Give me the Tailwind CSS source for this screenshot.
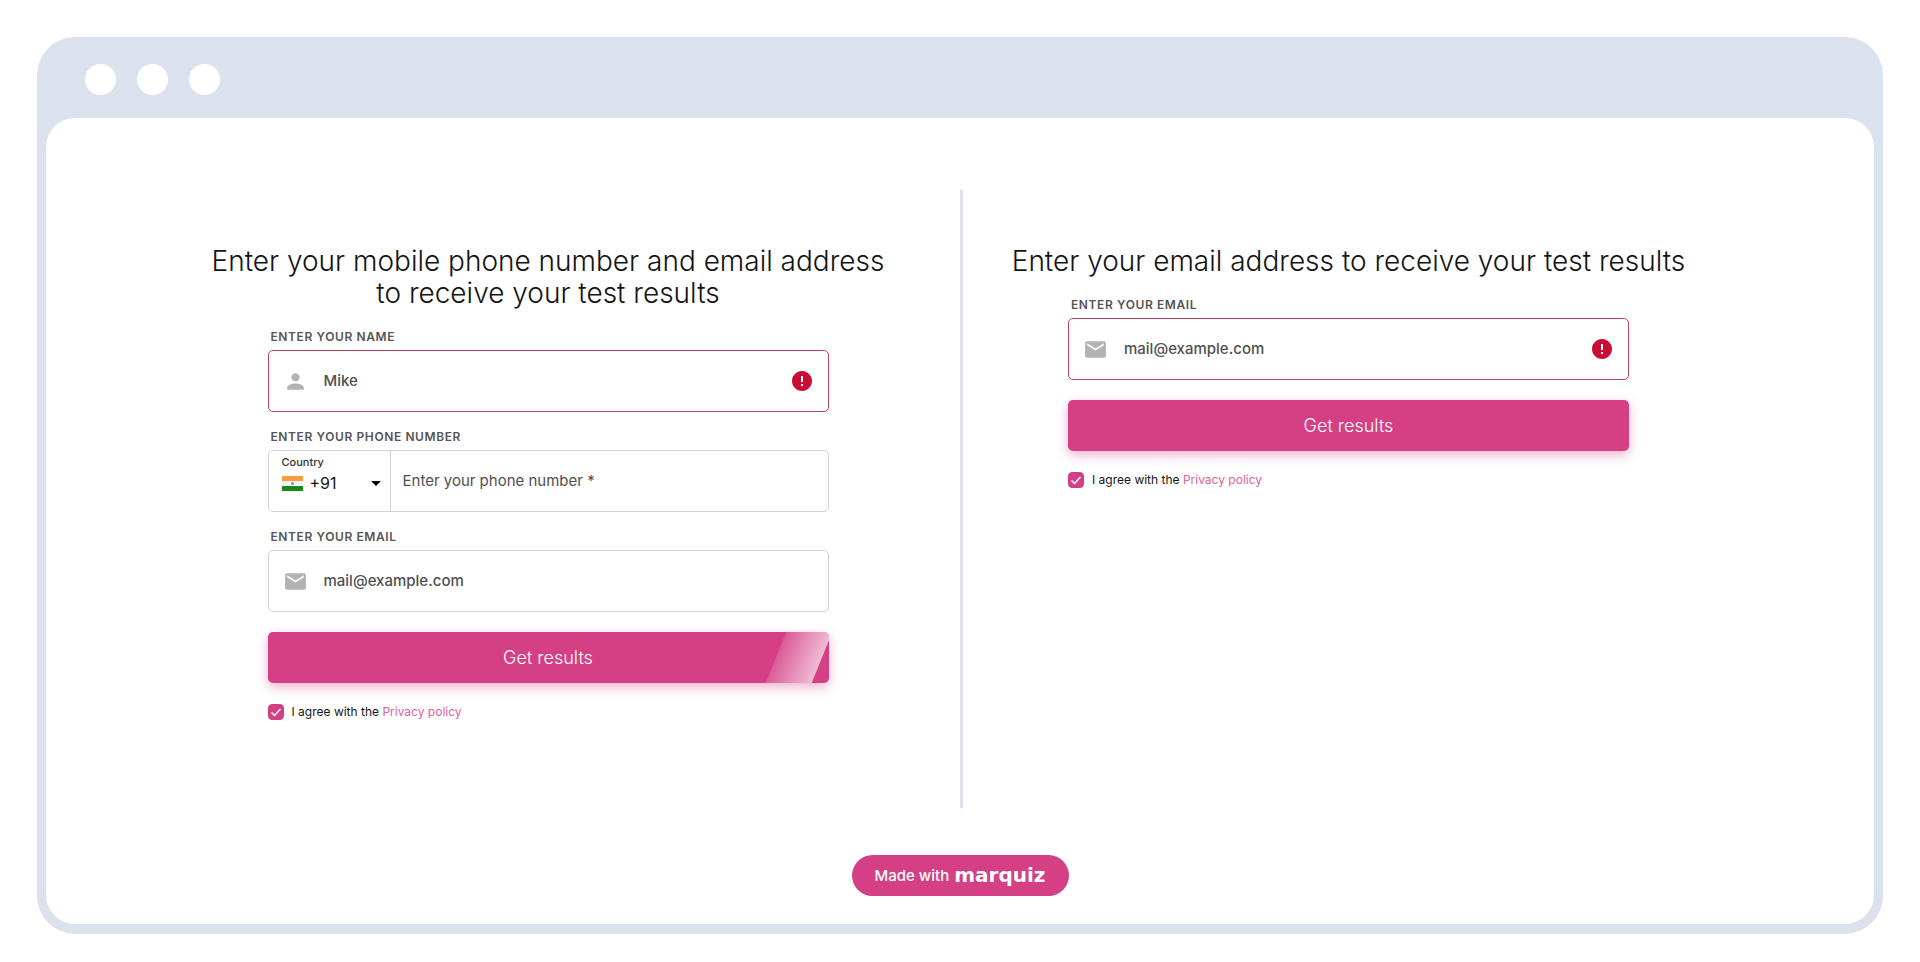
<!DOCTYPE html>
<html lang="en">
<head>
  <meta charset="UTF-8">
  <meta name="viewport" content="width=device-width, initial-scale=1.0">
  <title>Contact form</title>
  <script src="https://cdn.jsdelivr.net/npm/@tailwindcss/browser@4"></script>
</head>
<body class="bg-white px-[37px] pt-[37px] pb-7 font-['Inter',sans-serif] text-[#141414]">

  <!-- Browser frame -->
  <div class="rounded-[38px] bg-[#dbe1ed] px-[9px] pb-[10px]">
    <div class="flex h-[81px] items-center gap-[21px] px-[39px] pt-[3px]">
      <span class="size-[31px] rounded-full bg-white"></span>
      <span class="size-[31px] rounded-full bg-white"></span>
      <span class="size-[31px] rounded-full bg-white"></span>
    </div>

    <main class="flex flex-col items-center rounded-[29px] bg-white pt-[72px] pb-7">
      <div class="grid min-h-[618px] w-full grid-cols-[824fr_3px_771fr] pr-[140px] pl-[90px]">

        <!-- Name, phone and email -->
        <section class="flex flex-col items-center pt-[55px]">
          <h2 class="text-center text-[28px] leading-8 font-light">Enter your mobile phone number and email address<br>to receive your test results</h2>

          <form class="mt-[19px] w-full max-w-[561px]">
            <label for="name" class="ml-[3px] block text-xs leading-[18px] font-semibold tracking-wider text-[#555]">ENTER YOUR NAME</label>
            <div class="mt-1 flex h-[62px] items-center rounded-[5px] border border-[#b9405f] px-[14px]">
              <svg class="size-[25px] shrink-0 fill-[#b3b3b3]" viewBox="0 0 24 24"><path d="M12 12c2.21 0 4-1.79 4-4s-1.79-4-4-4-4 1.79-4 4 1.79 4 4 4zm0 2c-2.67 0-8 1.34-8 4v2h16v-2c0-2.66-5.33-4-8-4z"/></svg>
              <input id="name" type="text" placeholder="Mike" class="min-w-0 grow px-4 text-[15px] font-medium outline-none placeholder:text-[#505050]">
              <svg class="size-6 shrink-0 fill-[#cb0c33]" viewBox="0 0 24 24"><path d="M12 2C6.48 2 2 6.48 2 12s4.48 10 10 10 10-4.48 10-10S17.52 2 12 2zm1 15h-2v-2h2v2zm0-4h-2V7h2v6z"/></svg>
            </div>

            <label for="phone" class="mt-4 ml-[3px] block text-xs leading-[18px] font-semibold tracking-wider text-[#555]">ENTER YOUR PHONE NUMBER</label>
            <div class="mt-1 flex h-[62px] rounded-[5px] border border-[#d2d2d2]">
              <div class="w-[122px] shrink-0 border-r border-[#d2d2d2] pr-[9px] pl-[13px]">
                <label for="country" class="mt-1 block text-[11px] leading-[14px] font-medium text-[#333]">Country</label>
                <div class="mt-[2px] flex items-center">
                  <svg class="h-[15px] w-[21px] shrink-0" viewBox="0 0 21 15">
                    <rect width="21" height="5" fill="#f89c3c"/>
                    <rect y="5" width="21" height="5" fill="#f3f3f6"/>
                    <rect y="10" width="21" height="5" fill="#178a1b"/>
                    <circle cx="10.5" cy="7.5" r="1.5" fill="#8e8eaa"/>
                  </svg>
                  <select id="country" class="min-w-0 grow appearance-none pl-[7px] text-base outline-none">
                    <option>+91</option>
                    <option>+1</option>
                    <option>+44</option>
                  </select>
                  <svg class="h-[5px] w-[10px] shrink-0" viewBox="0 0 10 5"><path d="M0 0h10L5 5z"/></svg>
                </div>
              </div>
              <input id="phone" type="tel" placeholder="Enter your phone number *" class="min-w-0 grow px-3 text-[15px] outline-none placeholder:text-[#505050]">
            </div>

            <label for="email" class="mt-4 ml-[3px] block text-xs leading-[18px] font-semibold tracking-wider text-[#555]">ENTER YOUR EMAIL</label>
            <div class="mt-1 flex h-[62px] items-center rounded-[5px] border border-[#d2d2d2] px-[14px]">
              <svg class="size-[25px] shrink-0 fill-[#b3b3b3]" viewBox="0 0 24 24"><path d="M20 4H4c-1.1 0-1.99.9-1.99 2L2 18c0 1.1.9 2 2 2h16c1.1 0 2-.9 2-2V6c0-1.1-.9-2-2-2zm0 4l-8 5-8-5V6l8 5 8-5v2z"/></svg>
              <input id="email" type="email" placeholder="mail@example.com" class="min-w-0 grow px-4 text-[15px] font-medium outline-none placeholder:text-[#505050]">
            </div>

            <button type="button" class="relative mt-5 h-[51px] w-full overflow-hidden rounded-[5px] bg-[#d43f85] text-lg font-light text-white shadow-[0_4px_12px_rgba(212,63,133,0.4)]">
              Get results
              <span class="absolute inset-y-0 right-[7px] w-[46px] -skew-x-[22deg] bg-linear-to-r from-white/15 to-white/65"></span>
            </button>

            <div class="mt-[21px] flex items-center gap-2 text-xs leading-4">
              <span class="grid">
                <input id="agree-1" type="checkbox" checked class="peer col-start-1 row-start-1 size-4 appearance-none rounded-[4px] border border-[#d43f85] checked:bg-[#d43f85]">
                <svg class="pointer-events-none invisible col-start-1 row-start-1 size-4 fill-none stroke-white stroke-[1.5] peer-checked:visible" viewBox="0 0 16 16"><path d="M3.5 8.5l3 3 6-6.500"/></svg>
              </span>
              <label for="agree-1">I agree with the <a href="#" class="text-[#d9659c]">Privacy policy</a></label>
            </div>
          </form>
        </section>

        <div class="bg-[#dbe1ed]"></div>

        <!-- Email only -->
        <section class="flex flex-col items-center pt-[55px]">
          <h2 class="text-center text-[28px] leading-8 font-light">Enter your email address to receive your test results</h2>

          <form class="mt-[19px] w-full max-w-[561px]">
            <label for="email-only" class="ml-[3px] block text-xs leading-[18px] font-semibold tracking-wider text-[#555]">ENTER YOUR EMAIL</label>
            <div class="mt-1 flex h-[62px] items-center rounded-[5px] border border-[#b9405f] px-[14px]">
              <svg class="size-[25px] shrink-0 fill-[#b3b3b3]" viewBox="0 0 24 24"><path d="M20 4H4c-1.1 0-1.99.9-1.99 2L2 18c0 1.1.9 2 2 2h16c1.1 0 2-.9 2-2V6c0-1.1-.9-2-2-2zm0 4l-8 5-8-5V6l8 5 8-5v2z"/></svg>
              <input id="email-only" type="email" placeholder="mail@example.com" class="min-w-0 grow px-4 text-[15px] font-medium outline-none placeholder:text-[#505050]">
              <svg class="size-6 shrink-0 fill-[#cb0c33]" viewBox="0 0 24 24"><path d="M12 2C6.48 2 2 6.48 2 12s4.48 10 10 10 10-4.48 10-10S17.52 2 12 2zm1 15h-2v-2h2v2zm0-4h-2V7h2v6z"/></svg>
            </div>

            <button type="button" class="mt-5 h-[51px] w-full rounded-[5px] bg-[#d43f85] text-lg font-light text-white shadow-[0_4px_12px_rgba(212,63,133,0.4)]">Get results</button>

            <div class="mt-[21px] flex items-center gap-2 text-xs leading-4">
              <span class="grid">
                <input id="agree-2" type="checkbox" checked class="peer col-start-1 row-start-1 size-4 appearance-none rounded-[4px] border border-[#d43f85] checked:bg-[#d43f85]">
                <svg class="pointer-events-none invisible col-start-1 row-start-1 size-4 fill-none stroke-white stroke-[1.5] peer-checked:visible" viewBox="0 0 16 16"><path d="M3.5 8.5l3 3 6-6.500"/></svg>
              </span>
              <label for="agree-2">I agree with the <a href="#" class="text-[#d9659c]">Privacy policy</a></label>
            </div>
          </form>
        </section>
      </div>

      <a href="#" class="mt-[47px] flex h-[41px] w-[217px] items-center justify-center gap-[5px] rounded-full bg-[#d43f85] text-white">
        <span class="text-[15px] leading-5 font-medium">Made with</span>
        <span class="pb-[2px] font-['DejaVu_Sans',sans-serif] text-xl leading-5 font-bold">marquiz</span>
      </a>
    </main>
  </div>

</body>
</html>
